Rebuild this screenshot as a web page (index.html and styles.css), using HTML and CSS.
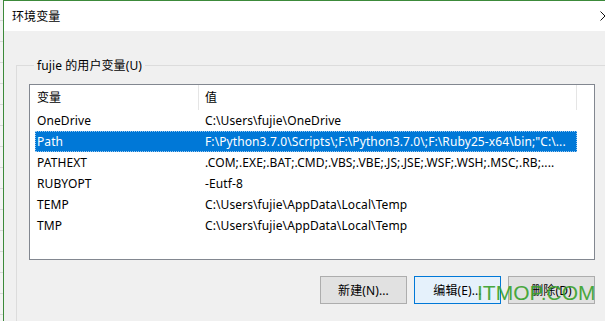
FILE: index.html
```html
<!DOCTYPE html>
<html>
<head>
  <title>环境变量</title>
  <meta charset="utf-8">
  <link rel="stylesheet" href="styles.css">
</head>
<body>
  <div class="screen">
    <div class="desk"></div>
    <div class="window">
      <div class="titlebar">
        <span>环境变量</span>
        <svg class="close" width="10" height="10" viewBox="0 0 10 10">
          <path d="M0.5 0.5 L9.5 9.5 M9.5 0.5 L0.5 9.5" stroke="#111" stroke-width="1" fill="none"/>
        </svg>
      </div>
      <div class="content">
        <div class="group">
          <span class="group-title">fujie 的用户变量(U)</span>
          <div class="panel">
            <div class="listbox">
              <div class="list-head">
                <div class="head-cell">变量</div>
                <div class="head-cell">值</div>
              </div>
              <div class="row"><div class="name">OneDrive</div><div class="value">C:\Users\fujie\OneDrive</div></div>
              <div class="row selected"><div class="name">Path</div><div class="value">F:\Python3.7.0\Scripts\;F:\Python3.7.0\;F:\Ruby25-x64\bin;"C:\...</div></div>
              <div class="row"><div class="name">PATHEXT</div><div class="value">.COM;.EXE;.BAT;.CMD;.VBS;.VBE;.JS;.JSE;.WSF;.WSH;.MSC;.RB;....</div></div>
              <div class="row"><div class="name">RUBYOPT</div><div class="value">-Eutf-8</div></div>
              <div class="row"><div class="name">TEMP</div><div class="value">C:\Users\fujie\AppData\Local\Temp</div></div>
              <div class="row"><div class="name">TMP</div><div class="value">C:\Users\fujie\AppData\Local\Temp</div></div>
            </div>
            <div class="buttons">
              <button type="button" class="btn">新建(N)...</button>
              <button type="button" class="btn focused">编辑(E)...</button>
              <button type="button" class="btn">删除(D)</button>
            </div>
          </div>
        </div>
      </div>
      <div class="watermark">ITMOP.COM</div>
    </div>
  </div>
</body>
</html>
```
FILE: styles.css
```css
/* página inteira */
body {
  margin: 0;
  font-family: "Noto Sans", "Noto Sans CJK SC", sans-serif;
  font-size: 12px;
  letter-spacing: 0.1px;
  color: #000;
  background-color: #f0f0f0;
}

.screen {
  display: flex;
  width: 605px;
  height: 321px;
  overflow: hidden;
}

/* pedaço da janela de trás */
.desk {
  width: 3px;
  flex: none;
  background: repeating-linear-gradient(#f4f4f4 0, #f4f4f4 20px, #d8d8d8 20px, #d8d8d8 21px);
}

.window {
  position: relative;
  flex: 1;
  border-left: 1px solid #3c8a3a;
  border-top: 1px solid #3c8a3a;
  background-color: #f0f0f0;
  overflow: hidden;
}

/* barra de título */
.titlebar {
  display: flex;
  align-items: center;
  justify-content: space-between;
  height: 30px;
  padding-left: 8px;
  background-color: #fff;
}

.close {
  margin-right: -5px;
}

.content {
  padding: 34px 0 0 12px;
}

/* caixa de grupo */
.group {
  display: flex;
  flex-direction: column;
  align-items: flex-start;
  border-top: 1px solid #dcdcdc;
  border-left: 1px solid #dcdcdc;
  padding-left: 12px;
  height: 300px;
}

.group-title {
  margin: -8px 0 0 5px;
  padding: 0 3px;
  line-height: 16px;
  background-color: #f0f0f0;
}

.panel {
  width: 566px;
  margin-top: 10px;
}

/* lista */
.listbox {
  box-sizing: border-box;
  width: 566px;
  height: 176px;
  border: 1px solid #828790;
  background-color: #fff;
  padding-left: 5px;
}

.list-head {
  display: grid;
  grid-template-columns: 164px 378px;
  height: 25px;
}

.head-cell {
  box-sizing: border-box;
  border-right: 1px solid #e5e5e5;
  padding: 1px 0 0 2px;
  line-height: 24px;
}

.head-cell + .head-cell {
  padding-left: 6px;
}

.row {
  box-sizing: border-box;
  display: grid;
  grid-template-columns: 163px 1fr;
  width: 542px;
  height: 21px;
  border: 1px solid transparent;
  line-height: 19px;
  white-space: nowrap;
}

.row .name {
  padding-left: 1px;
}

.row .value {
  padding-left: 6px;
  overflow: hidden;
}

.row.selected {
  background-color: #0078d7;
  color: #fff;
  border: 1px dotted #9cc8ef;
}

/* botões */
.buttons {
  display: flex;
  justify-content: flex-end;
  gap: 7px;
  margin-top: 16px;
}

.btn {
  width: 87px;
  height: 28px;
  border: 1px solid #adadad;
  background-color: #e1e1e1;
  font-family: inherit;
  font-size: 12px;
  letter-spacing: 0.1px;
  color: #000;
  padding: 0;
}

.btn.focused {
  border-color: #0078d7;
  background-color: #e5f1fb;
}

/* marca d'água */
.watermark {
  position: absolute;
  left: 473px;
  top: 280px;
  font-family: "Liberation Sans", sans-serif;
  font-size: 21px;
  line-height: 24px;
  letter-spacing: 0;
  color: #38a12b;
  opacity: 0.9;
}
```
